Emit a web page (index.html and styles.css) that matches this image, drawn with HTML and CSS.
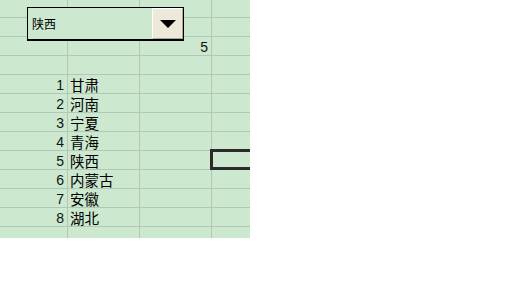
FILE: index.html
```html
<!DOCTYPE html>
<html lang="zh">
<head>
  <meta charset="UTF-8">
  <title>Sheet</title>
  <link rel="stylesheet" href="styles.css">
</head>
<body>
  <div class="sheet">
    <div class="grid">
      <div class="cell"></div><div class="cell"></div><div class="cell"></div><div class="cell"></div>
      <div class="cell"></div><div class="cell"></div><div class="cell"></div><div class="cell"></div>
      <div class="cell"></div><div class="cell"></div><div class="cell num">5</div><div class="cell"></div>
      <div class="cell"></div><div class="cell"></div><div class="cell"></div><div class="cell"></div>
      <div class="cell num">1</div><div class="cell name">甘肃</div><div class="cell"></div><div class="cell"></div>
      <div class="cell num">2</div><div class="cell name">河南</div><div class="cell"></div><div class="cell"></div>
      <div class="cell num">3</div><div class="cell name">宁夏</div><div class="cell"></div><div class="cell"></div>
      <div class="cell num">4</div><div class="cell name">青海</div><div class="cell"></div><div class="cell"></div>
      <div class="cell num">5</div><div class="cell name">陕西</div><div class="cell"></div><div class="cell sel"></div>
      <div class="cell num">6</div><div class="cell name">内蒙古</div><div class="cell"></div><div class="cell"></div>
      <div class="cell num">7</div><div class="cell name">安徽</div><div class="cell"></div><div class="cell"></div>
      <div class="cell num">8</div><div class="cell name">湖北</div><div class="cell"></div><div class="cell"></div>
      <div class="cell"></div><div class="cell"></div><div class="cell"></div><div class="cell"></div>
    </div>

    <div class="combo">
      <span class="combo-text">陕西</span>
      <span class="combo-btn"><span class="arrow"></span></span>
    </div>
  </div>
</body>
</html>
```

FILE: styles.css
```css
body {
  margin: 0;
  background: #fff;
  font-family: "Liberation Sans", "Noto Sans CJK SC", sans-serif;
  color: #000;
}
.sheet {
  position: relative;
  width: 250px;
  height: 238px;
  overflow: hidden;
  background: #cce8cf;
}
.grid {
  display: grid;
  grid-template-columns: 68px 72px 72px 39px;
  grid-template-rows: 18px repeat(12, 19px);
}
.cell {
  box-sizing: border-box;
  border-right: 1px solid #b2c8b4;
  border-bottom: 1px solid #b2c8b4;
  font-size: 14px;
  line-height: 18px;
  padding-top: 1px;
  white-space: nowrap;
}
.cell.num {
  text-align: right;
  padding-right: 3px;
  color: #111;
}
.cell.name {
  padding-left: 2px;
  font-family: "Noto Sans CJK SC", sans-serif;
  font-size: 14.5px;
}
.cell.sel {
  position: relative;
}
.cell.sel::after {
  content: "";
  position: absolute;
  left: -2px; top: -2px;
  right: -6px; bottom: -1px;
  border: 3px solid #2a2a2a;
}

/* dropdown control lying over the sheet */
.combo {
  position: absolute;
  left: 27px; top: 7px;
  width: 157px; height: 34px;
  box-sizing: border-box;
  border: 1px solid #000;
  border-bottom-width: 2px;
  background: #cce8cf;
  display: flex;
}
.combo-text {
  flex: 1;
  padding-left: 4px;
  font-family: "Noto Sans CJK SC", sans-serif;
  font-size: 12px;
  line-height: 32px;
}
.combo-btn {
  width: 31px;
  box-sizing: border-box;
  background: #ece9d8;
  border-top: 1px solid #fff;
  border-left: 1px solid #fff;
  border-right: 1px solid #aca899;
  border-bottom: 1px solid #aca899;
  display: flex;
  align-items: center;
  justify-content: center;
}
.arrow {
  width: 0; height: 0;
  border-left: 8px solid transparent;
  border-right: 8px solid transparent;
  border-top: 8px solid #000;
}
```
